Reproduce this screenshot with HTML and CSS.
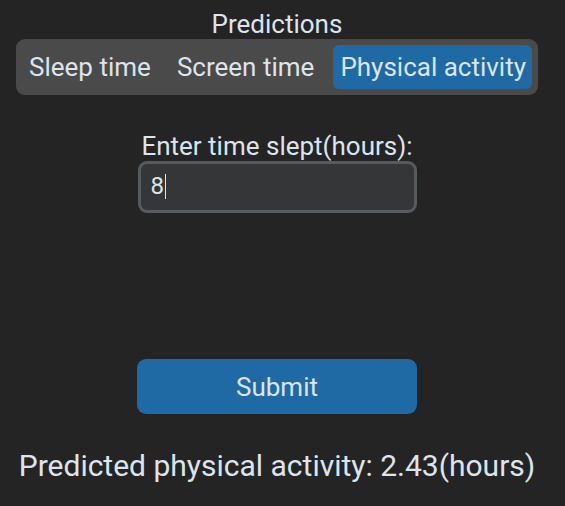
FILE: index.html
```html
<!DOCTYPE html>
<html>
<head>
<meta charset="utf-8">
<link rel="stylesheet" href="styles.css">
</head>
<body>
<div class="app">
  <div class="title">Predictions</div>
  <div class="segmented">
    <div class="seg">Sleep time</div>
    <div class="seg">Screen time</div>
    <div class="seg active">Physical activity</div>
  </div>
  <div class="label">Enter time slept(hours):</div>
  <div class="entry"><span class="val">8</span><span class="caret"></span></div>
  <div class="spacer"></div>
  <div class="submit">Submit</div>
  <div class="result">Predicted physical activity: 2.43(hours)</div>
</div>
</body>
</html>
```
FILE: styles.css
```css
html, body {
  margin: 0;
  padding: 0;
  background: #242424;
}
body {
  width: 565px;
  height: 506px;
  overflow: hidden;
  font-family: Roboto, "Liberation Sans", sans-serif;
  color: #dce4ee;
}
.app {
  display: flex;
  flex-direction: column;
  align-items: center;
  padding-right: 11px;
}
.title {
  margin-top: 10px;
  font-size: 26px;
  line-height: 29px;
}
.segmented {
  width: 522px;
  height: 56px;
  box-sizing: border-box;
  padding: 6px;
  background: #4a4a4a;
  border-radius: 9px;
  display: flex;
  align-items: stretch;
  justify-content: space-between;
  align-self: flex-start;
  margin-left: 16px;
}
.seg {
  font-size: 26px;
  display: flex;
  align-items: center;
  padding: 0 7px 1px;
  border-radius: 6px;
}
.seg.active {
  background: #1f6aa5;
  padding: 0 6px 1px 7px;
}
.label {
  margin-top: 36px;
  font-size: 26px;
  line-height: 30px;
}
.entry {
  width: 279px;
  height: 52px;
  box-sizing: border-box;
  border: 3px solid #565b5e;
  background: #343638;
  border-radius: 9px;
  display: flex;
  align-items: center;
  padding-left: 10px;
  padding-bottom: 2px;
  font-size: 24px;
}
.caret {
  display: inline-block;
  width: 1px;
  height: 25px;
  background: #dce4ee;
  margin-left: 1px;
}
.spacer {
  height: 146px;
}
.submit {
  width: 280px;
  height: 55px;
  background: #1f6aa5;
  border-radius: 9px;
  display: flex;
  align-items: center;
  justify-content: center;
  font-size: 26px;
}
.result {
  margin-top: 34px;
  font-size: 30px;
  line-height: 36px;
}
```
